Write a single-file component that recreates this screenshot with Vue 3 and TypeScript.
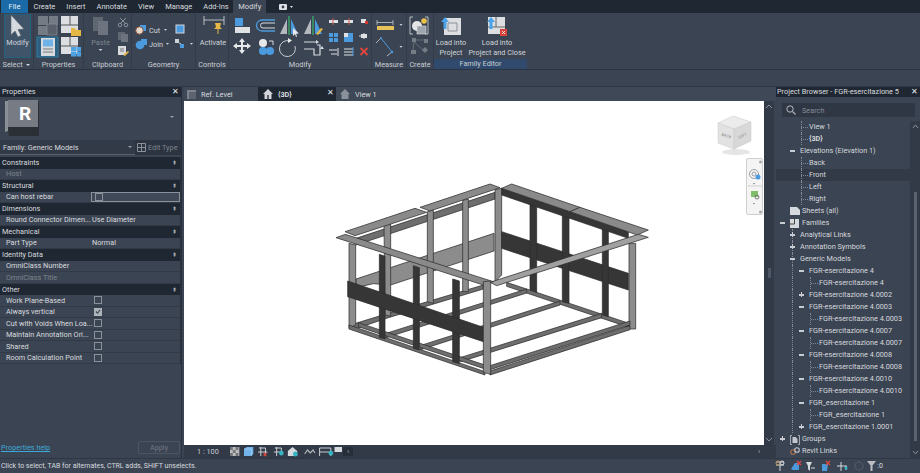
<script setup lang="ts">
const tabs = ['Create', 'Insert', 'Annotate', 'View', 'Manage', 'Add-Ins']

type Row = { label: string; kind: 'head' | 'row'; value?: string; check?: boolean; checked?: boolean; dim?: boolean; active?: boolean }
const rows: Row[] = [
  { label: 'Constraints', kind: 'head' },
  { label: 'Host', kind: 'row', dim: true },
  { label: 'Structural', kind: 'head' },
  { label: 'Can host rebar', kind: 'row', check: true, active: true },
  { label: 'Dimensions', kind: 'head' },
  { label: 'Round Connector Dimen...', kind: 'row', value: 'Use Diameter' },
  { label: 'Mechanical', kind: 'head' },
  { label: 'Part Type', kind: 'row', value: 'Normal' },
  { label: 'Identity Data', kind: 'head' },
  { label: 'OmniClass Number', kind: 'row' },
  { label: 'OmniClass Title', kind: 'row', dim: true },
  { label: 'Other', kind: 'head' },
  { label: 'Work Plane-Based', kind: 'row', check: true },
  { label: 'Always vertical', kind: 'row', check: true, checked: true },
  { label: 'Cut with Voids When Loa...', kind: 'row', check: true },
  { label: 'Maintain Annotation Ori...', kind: 'row', check: true },
  { label: 'Shared', kind: 'row', check: true },
  { label: 'Room Calculation Point', kind: 'row', check: true },
]

type Node = { t: string; x: number; sign?: '+' | '-'; hl?: boolean; bold?: boolean; icon?: string; sx?: number; dash?: boolean }
const tree: Node[] = [
  { t: 'View 1', x: 33, dash: true },
  { t: '{3D}', x: 33, bold: true, dash: true },
  { t: 'Elevations (Elevation 1)', x: 24, sign: '-', sx: 14 },
  { t: 'Back', x: 33, dash: true },
  { t: 'Front', x: 33, hl: true, dash: true },
  { t: 'Left', x: 33, dash: true },
  { t: 'Right', x: 33, dash: true },
  { t: 'Sheets (all)', x: 26, icon: 'sheet' },
  { t: 'Families', x: 26, sign: '-', sx: 4, icon: 'fam' },
  { t: 'Analytical Links', x: 24, sign: '+', sx: 14 },
  { t: 'Annotation Symbols', x: 24, sign: '+', sx: 14 },
  { t: 'Generic Models', x: 24, sign: '-', sx: 14 },
  { t: 'FGR-esercitazione 4', x: 33, sign: '-', sx: 23 },
  { t: 'FGR-esercitazione 4', x: 43, dash: true },
  { t: 'FGR-esercitazione 4.0002', x: 33, sign: '+', sx: 23 },
  { t: 'FGR-esercitazione 4.0003', x: 33, sign: '-', sx: 23 },
  { t: 'FGR-esercitazione 4.0003', x: 43, dash: true },
  { t: 'FGR-esercitazione 4.0007', x: 33, sign: '-', sx: 23 },
  { t: 'FGR-esercitazione 4.0007', x: 43, dash: true },
  { t: 'FGR-esercitazione 4.0008', x: 33, sign: '-', sx: 23 },
  { t: 'FGR-esercitazione 4.0008', x: 43, dash: true },
  { t: 'FGR-esercitazione 4.0010', x: 33, sign: '-', sx: 23 },
  { t: 'FGR-esercitazione 4.0010', x: 43, dash: true },
  { t: 'FGR_esercitazione 1', x: 33, sign: '-', sx: 23 },
  { t: 'FGR_esercitazione 1', x: 43, dash: true },
  { t: 'FGR_esercitazione 1.0001', x: 33, sign: '+', sx: 23 },
  { t: 'Groups', x: 26, sign: '+', sx: 4, icon: 'grp' },
  { t: 'Revit Links', x: 26, icon: 'link' },
]

function guides(i: number, n: Node): number[] {
  const g: number[] = []
  if (i >= 9 && i <= 25) g.push(16)
  if (i <= 1 || (i >= 3 && i <= 6)) g.push(25)
  if (n.dash && n.x === 43) g.push(34)
  return g
}

const L = '#8c8c8c', M = '#6e6e6e', D = '#363636', P = '#8a8a8a', W = '#a0a0a0'
const model: { p: string; f: string }[] = [
  // floor beams
  { p: '60,450 175,415 460,330 460,342 175,428 75,462', f: M },
  { p: '530,322 900,446 900,458 530,334', f: M },
  { p: '165,476 590,342 590,354 168,488', f: M },
  { p: '270,512 690,378 690,390 272,524', f: M },
  { p: '390,548 815,415 815,428 392,560', f: M },
  // back-left wall
  { p: '78,190 495,52 495,72 78,210', f: M },
  { p: '78,312 492,175 492,228 182,330 130,326 78,338', f: L },
  { p: '162,150 182,145 182,424 165,420', f: L },
  { p: '292,110 310,104 310,385 292,380', f: L },
  { p: '398,76 415,72 415,350 398,350', f: L },
  { p: '495,44 515,40 515,300 495,320', f: L },
  // back-right wall
  { p: '515,170 895,295 895,345 515,220', f: D },
  { p: '600,72 620,80 620,352 600,345', f: D },
  { p: '697,108 717,115 717,385 697,380', f: D },
  { p: '817,150 835,155 835,425 817,420', f: D },
  { p: '897,205 917,205 917,462 897,462', f: L },
  { p: '515,40 895,170 895,190 515,60', f: D },
  // back plates
  { p: '45,170 255,100 290,112 75,182', f: P },
  { p: '270,97 480,27 510,38 300,108', f: P },
  { p: '515,40 545,27 750,97 720,110', f: P },
  { p: '720,110 750,97 955,165 922,180', f: P },
  // left corner
  { p: '57,205 77,210 77,450 57,460', f: L },
  // front floor beams
  { p: '85,443 465,570 465,582 85,455', f: M },
  { p: '57,450 465,590 465,600 57,462', f: M },
  { p: '480,572 900,438 900,450 480,584', f: M },
  { p: '480,588 900,452 900,464 480,600', f: M },
  // front-left wall
  { p: '148,238 165,244 165,492 148,487', f: D },
  { p: '250,272 268,278 268,525 250,520', f: D },
  { p: '368,312 388,318 388,566 368,560', f: D },
  { p: '53,318 460,457 460,500 53,365', f: D },
  // plates front
  { p: '480,322 925,178 955,187 500,332', f: W },
  { p: '18,188 46,178 490,320 460,330', f: P },
  // front corner
  { p: '460,320 482,318 482,598 460,592', f: L },
]
</script>

<template>
  <div class="app">
    <div class="tabs">
      <span class="file">File</span>
      <span v-for="t in tabs" :key="t" class="tab">{{ t }}</span>
      <span class="tab cur">Modify</span>
      <svg class="cam" width="14" height="8" viewBox="0 0 14 8"><rect x="0" y="1" width="8" height="6" rx="1" fill="#dfe3e8"/><circle cx="4" cy="4" r="1.400" fill="#39414f"/><path d="M11 3h3l-1.500 2z" fill="#dfe3e8"/></svg>
    </div>

    <div class="ribbon">
      <div class="grp" style="width:34px">
        <div class="gbody">
          <svg width="34" height="47" viewBox="0 13 34 47">
            <rect x="4.500" y="14.500" width="26" height="43" fill="#3f5369" stroke="#24627f"/>
            <path d="M11 15l0 20 4-4 3 6 3-1.500-3-6 6-.5z" fill="#d6dade" stroke="#56606c" stroke-width=".6"/>
            <text x="17.500" y="45" class="rt" text-anchor="middle">Modify</text>
          </svg>
        </div>
        <div class="glabel">Select <i class="dd"></i></div>
      </div>

      <div class="grp" style="width:50px">
        <div class="gbody">
          <svg width="50" height="47" viewBox="34 13 50 47">
            <rect x="38" y="16" width="10" height="9" fill="#747b85"/><rect x="49" y="16" width="9" height="9" fill="#747b85"/><rect x="38" y="26" width="9" height="9" fill="#747b85"/><rect x="47" y="24" width="10" height="11" fill="#5a616c" stroke="#858b94" stroke-width=".8"/>
            <rect x="61" y="16" width="17" height="17" fill="#dcdee1"/><path d="M70 16v9h8M70 25h-9" stroke="#555" fill="none"/><path d="M71 28h4l1 2h5v6h-10z" fill="#e5b845"/>
            <rect x="37" y="37" width="21" height="20" fill="#2f5f7e" stroke="#2f7da5"/>
            <rect x="41" y="38" width="14" height="18" fill="#d7dade"/><rect x="43" y="39.500" width="10" height="7" fill="#6fb2e6"/><path d="M43 49h10M43 52h10" stroke="#777"/>
            <rect x="61" y="37" width="17" height="17" fill="#dcdee1"/><path d="M70 37v9h8M70 46h-9" stroke="#555" fill="none"/><rect x="71" y="47" width="5" height="4.500" fill="#4ea1e3"/><rect x="76.500" y="47" width="4.500" height="4.500" fill="#4ea1e3"/><rect x="71" y="52" width="5" height="4.500" fill="#4ea1e3"/><rect x="76.500" y="52" width="4.500" height="4.500" fill="#4ea1e3"/>
          </svg>
        </div>
        <div class="glabel">Properties</div>
      </div>

      <div class="grp" style="width:48px">
        <div class="gbody">
          <svg width="48" height="47" viewBox="84 13 48 47">
            <rect x="93" y="17" width="10" height="14" fill="#5f6772"/><rect x="98" y="21" width="10" height="14" fill="#6d747f"/>
            <text x="100.500" y="45" class="rt dim" text-anchor="middle">Paste</text><path d="M98.500 49h4l-2 2z" fill="#c8ccd2"/>
            <g stroke="#8a909a" fill="none" stroke-width="1"><path d="M120 18l6 6M126 18l-6 6"/><circle cx="120" cy="25" r="1.800"/><circle cx="126" cy="25" r="1.800"/></g>
            <rect x="118" y="32" width="7" height="8" fill="#5f6772"/><rect x="121" y="34" width="7" height="8" fill="#6d747f"/>
            <rect x="118" y="46" width="8" height="9" fill="#d8dade"/><path d="M120 49h4M120 51h4" stroke="#777"/><path d="M123 55l5-4 1 1-4 4z" fill="#e5b845"/>
          </svg>
        </div>
        <div class="glabel">Clipboard</div>
      </div>

      <div class="grp" style="width:64px">
        <div class="gbody">
          <svg width="64" height="47" viewBox="132 13 64 47">
            <rect x="140" y="25" width="6" height="6" fill="#4c9ade"/><circle cx="139.500" cy="30.500" r="3.800" fill="#e2d7c8" stroke="#7a4b3a"/>
            <text x="149" y="33" class="rt">Cut</text><path d="M164 29h3l-1.500 1.800z" fill="#d6dade"/>
            <rect x="141" y="39" width="6" height="6" fill="#4c9ade"/><circle cx="140" cy="45" r="4.300" fill="#4c9ade"/>
            <text x="149" y="47" class="rt">Join</text><path d="M166 43h3l-1.500 1.800z" fill="#d6dade"/>
            <rect x="176" y="25" width="8" height="8" fill="#4c9ade" stroke="#cfd3d8"/>
            <rect x="175" y="39" width="4" height="4" fill="#cfd3d8"/><rect x="180" y="44" width="4" height="4" fill="#4c9ade"/><path d="M179 43l2 1" stroke="#ccc"/>
            <path d="M190 43h3l-1.500 1.800z" fill="#d6dade"/>
          </svg>
        </div>
        <div class="glabel">Geometry</div>
      </div>

      <div class="grp" style="width:33px">
        <div class="gbody">
          <svg width="33" height="47" viewBox="196 13 33 47">
            <path d="M204 16v9M224 16v9M204 20h20" stroke="#d6dade" stroke-width=".8" fill="none"/>
            <path d="M215 23h6l-1 4 2 2h-8l2-2z" fill="#e5b845"/><path d="M218 29v5" stroke="#e5b845"/>
            <text x="213" y="45" class="rt" text-anchor="middle">Activate</text>
          </svg>
        </div>
        <div class="glabel">Controls</div>
      </div>

      <div class="grp" style="width:143px">
        <div class="gbody">
          <svg width="143" height="47" viewBox="229 13 143 47">
            <rect x="235" y="18" width="8" height="8" fill="#4c9ade"/><path d="M235 27h15v6h-15z" fill="#dfe1e4"/>
            <path d="M275 20h-13a5.500 5.500 0 0 0 0 11h13" fill="none" stroke="#4c9ade" stroke-width="1.300"/><path d="M275 23h-12a2.500 2.500 0 0 0 0 5h12" fill="none" stroke="#d6dade"/>
            <path d="M287 19l-7 15h7z" fill="#b4b8be"/><path d="M289 16v19" stroke="#3d9e6a" stroke-width="1.500"/><path d="M291 19l7 15h-7z" fill="#4c9ade"/><path d="M293 28v8l2-2 1 3 1-.5-1-3h3z" fill="#e8e8e8"/>
            <path d="M311 19l-7 15h7z" fill="#b4b8be"/><path d="M313 16v19" stroke="#3d9e6a" stroke-width="1.500"/><path d="M315 19l7 15h-7z" fill="#4c9ade"/><path d="M316 34l5-6 2 1-5 6z" fill="#e5b845"/>
            <g fill="#dfe1e4"><rect x="329" y="20" width="9" height="3"/><rect x="344" y="20" width="9" height="3"/><rect x="361" y="19" width="5" height="4"/></g>
            <path d="M333 18v7M349 18v7" stroke="#d05a4a"/><rect x="365" y="21" width="3" height="3" fill="#d0392d"/>
            <path d="M242 38l3 4h-2v3h4v-2l4 3-4 3v-2h-4v3h2l-3 4-3-4h2v-3h-4v2l-4-3 4-3v2h4v-3h-2z" fill="#e6e8ea"/>
            <circle cx="263" cy="43" r="4" fill="#e6e8ea"/><path d="M269 41h4v4" fill="none" stroke="#d6dade"/><circle cx="263" cy="51" r="4" fill="#4c9ade"/><circle cx="270" cy="51" r="4" fill="#4c9ade"/>
            <path d="M290 41a8 8 0 1 0 5 5" fill="none" stroke="#d6dade" stroke-width=".9"/><path d="M288 38l4 2.500-4 2.500z" fill="#e6e8ea"/>
            <path d="M304 42h13M317 45h3v10h-6v-6h-10" fill="none" stroke="#d6dade" stroke-width="1.200"/><path d="M316 40l3 2-3 2zM322 46l2 3h-4z" fill="#d6dade"/>
            <g fill="#4c9ade"><rect x="329" y="33" width="4" height="4"/><rect x="334" y="33" width="4" height="4"/><rect x="329" y="38" width="4" height="4"/><rect x="334" y="38" width="4" height="4"/></g>
            <rect x="344" y="33" width="9" height="9" fill="#4c9ade"/><rect x="344" y="33" width="4" height="4" fill="#dfe1e4"/>
            <rect x="361" y="34" width="6" height="4" fill="#dfe1e4"/><path d="M359 36h3M364 33v6" stroke="#dfe1e4"/>
            <path d="M329 50h8M331 54h6M338 48v8" stroke="#dfe1e4" fill="none"/><path d="M344 49h9M344 52h9M344 55h9" stroke="#dfe1e4" fill="none"/><path d="M353 47v9" stroke="#4c9ade"/>
            <path d="M360.500 48l7 7M367.500 48l-7 7" stroke="#e0463a" stroke-width="1.800"/>
          </svg>
        </div>
        <div class="glabel">Modify</div>
      </div>

      <div class="grp" style="width:35px">
        <div class="gbody">
          <svg width="35" height="47" viewBox="372 13 35 47">
            <path d="M377 20v5M393 20v5M377 22.500h16" stroke="#d6dade" stroke-width=".7" fill="none"/><rect x="377" y="26" width="17" height="4" fill="#e5c35a"/>
            <path d="M399.500 24h3l-1.500 1.800z" fill="#d6dade"/>
            <path d="M376 43l5-5M387 56l6-5" stroke="#cfd3d8" fill="none" stroke-width=".8"/><path d="M381 38l11 14" stroke="#4c9ade"/><circle cx="381" cy="38" r="1" fill="#4c9ade"/><circle cx="392" cy="52" r="1.200" fill="#4c9ade"/>
            <path d="M399.500 46h3l-1.500 1.800z" fill="#d6dade"/>
          </svg>
        </div>
        <div class="glabel">Measure</div>
      </div>

      <div class="grp" style="width:27px">
        <div class="gbody">
          <svg width="27" height="47" viewBox="407 13 27 47">
            <path d="M413 17h-3v17h3M425 17h3v17h-3" stroke="#d6dade" fill="none" stroke-width=".8"/>
            <circle cx="417" cy="26" r="5" fill="#e4e6e8"/><rect x="417" y="26" width="9" height="8" fill="#9fa5ac" stroke="#dfe1e4" stroke-width=".6"/><circle cx="424" cy="21" r="2.800" fill="#e8c24a"/>
            <g fill="#767c86"><rect x="412" y="38" width="4" height="4"/><rect x="424" y="39" width="4" height="4"/><rect x="411" y="50" width="5" height="4"/><path d="M425 47l3 3-3 3-3-3z"/></g>
            <path d="M414 42l-1 8M416 40h8M414 42l9 8" stroke="#767c86" fill="none" stroke-width=".7"/>
          </svg>
        </div>
        <div class="glabel">Create</div>
      </div>

      <div class="grp fe" style="width:93px">
        <div class="gbody">
          <svg width="93" height="47" viewBox="434 13 93 47">
            <rect x="444" y="18" width="17" height="17" fill="#dcdee1"/><path d="M448 23h9v8h-9z" fill="none" stroke="#8c9197"/>
            <path d="M445 17l4 5h-2.500v7h-3v-7H441z" fill="#4aa3e8"/>
            <text x="451" y="45" class="rt" text-anchor="middle">Load into</text>
            <text x="451" y="55" class="rt" text-anchor="middle">Project</text>
            <rect x="488" y="17" width="17" height="17" fill="#dcdee1"/><path d="M496 17v10h9M488 27h8" stroke="#666" fill="none"/>
            <path d="M491 17l4 5h-2.500v7h-3v-7H487z" fill="#4aa3e8"/>
            <rect x="500" y="29" width="7" height="7" fill="#d8423a"/><path d="M502 31l3 3M505 31l-3 3" stroke="#fff" stroke-width=".8"/>
            <text x="497" y="45" class="rt" text-anchor="middle">Load into</text>
            <text x="497" y="55" class="rt" text-anchor="middle">Project and Close</text>
          </svg>
        </div>
        <div class="glabel blue">Family Editor</div>
      </div>
    </div>
    <div class="band"></div>

    <div class="main">
      <aside class="props">
        <div class="phead"><span>Properties</span><span class="x">✕</span></div>
        <div class="ptype">
          <svg width="38" height="38" viewBox="0 0 38 38"><path d="M4 4h34v34H8z" fill="#2b2f36"/><path d="M4 3h3v30l-3 1z" fill="#8b9098"/><rect x="7" y="2" width="30" height="27" fill="#777c84"/><text x="24" y="22" text-anchor="middle" class="rlogo">R</text></svg>
          <i class="ptdd"></i>
        </div>
        <div class="pfam">
          <div class="fam">Family: Generic Models<i class="ptdd small"></i></div>
          <div class="edit"><svg width="9" height="9" viewBox="0 0 9 9"><path d="M.5.500h8v8h-8zM.5 4.500h8M4.500.5v8" fill="none" stroke="#8b919a"/></svg>Edit Type</div>
        </div>
        <div class="plist">
          <div v-for="r in rows" :key="r.label" :class="r.kind === 'head' ? 'phd' : 'prow'">
            <template v-if="r.kind === 'head'">
              <span>{{ r.label }}</span><span class="cl">⇞</span>
            </template>
            <template v-else>
              <span class="pl" :class="{ dim: r.dim }">{{ r.label }}</span>
              <span class="pv" :class="{ act: r.active }">
                <span v-if="r.check" class="cb" :class="{ on: r.checked }"><svg v-if="r.checked" width="7" height="7" viewBox="0 0 7 7"><path d="M1 3.500l2 2 3-4" fill="none" stroke="#3b4453" stroke-width="1.300"/></svg></span>
                <template v-else>{{ r.value }}</template>
              </span>
            </template>
          </div>
        </div>
        <div class="pfoot"><a class="help">Properties help</a><span class="apply">Apply</span></div>
      </aside>

      <section class="center">
        <div class="vtabs">
          <div class="vt"><svg width="9" height="9" viewBox="0 0 9 9"><rect width="9" height="9" fill="#7c838d"/><rect x="2" y="2" width="7" height="7" fill="#5d6470"/></svg>Ref. Level</div>
          <div class="vt on"><svg width="10" height="10" viewBox="0 0 10 10"><path d="M5 0l5 5H8.500v5h-7V5H0z" fill="#d3d6da"/><rect x="4" y="6" width="2" height="4" fill="#5b636e"/></svg>{3D}<span class="x">✕</span></div>
          <div class="vt last"><svg width="10" height="10" viewBox="0 0 10 10"><path d="M5 0l5 5H8.500v5h-7V5H0z" fill="#8b919a"/></svg>View 1</div>
        </div>
        <div class="vmid">
          <div class="canvas">
            <svg class="model" width="320" height="215" viewBox="0 0 960 645">
              <polygon v-for="(m, i) in model" :key="i" :points="m.p" :fill="m.f" stroke="#2c2c2c" stroke-width="2.200" stroke-linejoin="round"/>
            </svg>
            <svg class="cube" width="40" height="44" viewBox="0 0 40 44">
              <ellipse cx="20" cy="39" rx="14" ry="3" fill="#e5e5e5"/>
              <path d="M2 10l15-7 18 6-17 7z" fill="#ececec" stroke="#c9c9c9" stroke-width=".5"/>
              <path d="M2 10l16 6v20L2 30z" fill="#e2e2e2" stroke="#c9c9c9" stroke-width=".5"/>
              <path d="M18 16l17-7v19l-17 8z" fill="#d8d8d8" stroke="#c9c9c9" stroke-width=".5"/>
              <text x="10" y="24" class="ct" transform="rotate(18 10 24)" text-anchor="middle">BACK</text>
              <text x="27" y="24" class="ct" transform="rotate(-22 27 24)" text-anchor="middle">LEFT</text>
            </svg>
            <div class="navbar">
              <svg width="16" height="56" viewBox="0 0 16 56">
                <circle cx="13.500" cy="3" r="1.500" fill="#aaa"/>
                <circle cx="7" cy="15" r="4.500" fill="none" stroke="#9aa0a8"/><circle cx="7" cy="15" r="2" fill="none" stroke="#9aa0a8"/><circle cx="11" cy="18" r="2.500" fill="#4c9ade"/>
                <path d="M6 24h2l-1 1.500z" fill="#777"/><path d="M1 27h14" stroke="#cfcfcf"/>
                <rect x="4" y="32" width="7" height="6" fill="#7fbf6a"/><circle cx="10" cy="38" r="2" fill="none" stroke="#777"/><path d="M6 44h2l-1 1.500z" fill="#777"/>
                <circle cx="13.500" cy="53" r="1.500" fill="#aaa"/>
              </svg>
            </div>
          </div>
          <div class="vsb"><svg width="10" height="6" viewBox="0 0 10 6"><path d="M2 4l3-3 3 3" fill="none" stroke="#8b919a"/></svg><span class="th"></span><span class="grow"></span><svg width="10" height="6" viewBox="0 0 10 6"><path d="M2 2l3 3 3-3" fill="none" stroke="#8b919a"/></svg></div>
        </div>
        <div class="vctl">
          <span class="scale">1 : 100</span>
          <svg width="112" height="11" viewBox="0 0 120 11" preserveAspectRatio="none">
            <g><rect x="0" y="1" width="10" height="9" fill="#b9bcc0"/><path d="M0 1h3v3H0zM6 1h3v3H6zM3 4h3v3H3zM0 7h3v3H0zM6 7h3v3H6z" fill="#777"/></g>
            <g><path d="M15 3l3-2h7v7l-2 2h-8z" fill="#72b4ea"/><path d="M15 3h8v7" fill="none" stroke="#a8d3f5" stroke-width=".7"/></g>
            <g stroke="#cfd3d8" fill="none"><path d="M30 6h10M33 1v9"/><path d="M31 2h7v6"/></g><path d="M36 7l3 3M39 7l-3 3" stroke="#e0463a" stroke-width="1.200"/>
            <g stroke="#cfd3d8" fill="none"><path d="M47 6h9M50 1v9M48 2h7v6"/></g><circle cx="55" cy="7" r="2.500" fill="#33b5c5"/>
            <path d="M62 5l5-4 5 4v5H62z" fill="#d6dade"/><circle cx="70" cy="8" r="2.500" fill="#33b5c5"/>
            <path d="M80 8l3-4 3 3 3-3 2 3" fill="none" stroke="#b5b9be" stroke-width="1.200"/>
            <path d="M96 2h12v8M96 2v8M96 6h12" fill="none" stroke="#cfd3d8"/><circle cx="108" cy="7" r="2.500" fill="#33b5c5"/>
            <rect x="112" y="1" width="8" height="5" fill="#d6dade"/>
          </svg>
          <span class="lt">‹</span>
          <span class="grow"></span>
          <span class="rt2">›</span>
        </div>
      </section>

      <aside class="browser">
        <div class="phead"><span>Project Browser - FGR-esercitazione 5</span><span class="x">✕</span></div>
        <div class="search"><svg width="10" height="10" viewBox="0 0 10 10"><circle cx="4" cy="4" r="3.200" fill="none" stroke="#b5b9be"/><path d="M6.500 6.500L9.500 9.500" stroke="#b5b9be" stroke-width="1.100"/></svg><span>Search</span></div>
        <div class="bwrap">
          <div class="tree">
            <div v-for="(n, i) in tree" :key="i" class="node" :class="{ hl: n.hl }" :style="{ paddingLeft: n.x + 'px' }">
              <span v-for="g in guides(i, n)" :key="g" class="vg" :style="{ left: g + 'px' }"></span>
              <span v-if="n.dash" class="dash" :style="{ left: (n.x - 8) + 'px' }"></span>
              <span v-if="n.sign" class="sign" :class="{ plus: n.sign === '+' }" :style="{ left: n.sx + 'px' }"></span>
              <svg v-if="n.icon === 'sheet'" class="nico" width="10" height="8" viewBox="0 0 10 8"><path d="M0 0h7l3 3v5H0z" fill="#d5d8dc"/></svg>
              <svg v-if="n.icon === 'fam'" class="nico" width="9" height="9" viewBox="0 0 9 9"><rect width="9" height="9" fill="#d5d8dc"/><path d="M4.500 0v5H0" fill="none" stroke="#444"/></svg>
              <svg v-if="n.icon === 'grp'" class="nico" width="10" height="10" viewBox="0 0 10 10"><path d="M2 .5H.5v9H2M8 .5h1.500v9H8" fill="none" stroke="#d5d8dc" stroke-width=".7"/><path d="M2.500 2h3l2 2v4h-5z" fill="#c3c7cc"/></svg>
              <svg v-if="n.icon === 'link'" class="nico" width="10" height="8" viewBox="0 0 10 8"><circle cx="3" cy="5" r="2.300" fill="none" stroke="#a8724f" stroke-width="1.100"/><circle cx="7" cy="3" r="2.300" fill="none" stroke="#c3c7cc" stroke-width="1.100"/></svg>
              <span :class="{ b: n.bold }">{{ n.t }}</span>
            </div>
          </div>
          <div class="bsb"><svg width="9" height="6" viewBox="0 0 9 6"><path d="M2 4l2.500-3 2.500 3" fill="none" stroke="#8b919a"/></svg><span class="bth"></span><svg width="9" height="6" viewBox="0 0 9 6"><path d="M2 2l2.500 3 2.500-3" fill="none" stroke="#8b919a"/></svg></div>
        </div>
      </aside>
    </div>

    <div class="status">
      <span class="msg">Click to select, TAB for alternates, CTRL adds, SHIFT unselects.</span>
      <svg width="102" height="12" viewBox="0 0 102 12">
        <path d="M1 2h8M1 5h8M5 5v6" stroke="#d6dade" fill="none"/><circle cx="3" cy="3" r="2" fill="none" stroke="#b9935a"/><circle cx="7" cy="3" r="2" fill="none" stroke="#d6dade"/>
        <path d="M16 9l4-6h4v7h-6z" fill="#4c9ade"/><path d="M22 1l4 4M26 1l-4 4" stroke="#e0463a" stroke-width="1.200"/>
        <path d="M31 2h6l-2 4v5l-2-2V6z" fill="#d6dade"/><path d="M36 8h4" stroke="#d6dade"/>
        <path d="M47 11V4h6l-1 7z" fill="#4c9ade"/><path d="M51 1l4 4M55 1l-4 4" stroke="#e0463a" stroke-width="1.200"/>
        <path d="M62 6h10M66 2v9M71 6v4" stroke="#d6dade" fill="none"/><circle cx="71" cy="8" r="1.500" fill="#33b5c5"/>
        <circle cx="84" cy="6" r="4" fill="none" stroke="#6d747f" stroke-dasharray="1.500 1.200"/>
        <path d="M92 1h9l-3.500 4.500V11h-2V5.500z" fill="#b9bdc2"/>
      </svg>
      <span class="zero">:0</span>
    </div>
  </div>
</template>

<style>
html, body { margin: 0; padding: 0; background: #3b4453; overflow: hidden; }
</style>

<style scoped>
.app { width: 920px; height: 473px; display: flex; flex-direction: column; overflow: hidden; font-family: Roboto, "Open Sans", sans-serif; font-size: 7.300px; color: #d8dbdf; background: #3b4453; }
.tabs { height: 13px; background: #1f2732; display: flex; align-items: stretch; line-height: 13px; color: #d8dbdf; font-size: 7.500px; }
.file { width: 27px; text-align: center; background: #1a6aa8; color: #e8eef4; margin-left: 1px; margin-right: 0; }
.tab { padding: 0 5.500px; }
.tab.cur { background: #3b4453; padding: 0 5px; margin-left: -1px; }
.cam { margin: 3px 0 0 13px; }
.ribbon { height: 57px; background: #3b4453; display: flex; border-bottom: 1px solid #2c3340; box-sizing: border-box; }
.grp { display: flex; flex-direction: column; border-right: 1px solid #333b49; box-sizing: border-box; }
.gbody { height: 47px; overflow: hidden; }
.gbody svg { display: block; overflow: visible; }
.glabel { height: 9px; line-height: 10px; text-align: center; color: #c8ccd2; white-space: nowrap; }
.glabel.blue { background: #2f4a6c; height: 10px; line-height: 10px; }
.fe { border-right: 0; }
.rt { font-size: 7.300px; fill: #d0d4d9; font-family: Roboto, sans-serif; }
.rt.dim { fill: #7d848e; }
.dd { display: inline-block; border: 2px solid transparent; border-top: 2.500px solid #d6dade; border-bottom: 0; margin-left: 2px; vertical-align: 1px; }
.band { height: 17px; background: #3b4453; border-bottom: 1px solid #2f3644; box-sizing: border-box; }
.main { flex: 1; min-height: 0; display: flex; }
.props { width: 182px; display: flex; flex-direction: column; background: #3b4453; border-right: 1px solid #2a313d; box-sizing: border-box; }
.phead { height: 10px; background: #1f2732; display: flex; justify-content: space-between; align-items: center; padding: 0 2px; line-height: 10px; color: #d8dbdf; flex: none; white-space: nowrap; }
.x { font-size: 8px; color: #e8eaed; }
.ptype { height: 43px; position: relative; padding: 1px 0 0 1px; box-sizing: border-box; flex: none; }
.ptype svg { display: block; }
.ptdd { position: absolute; right: 7px; top: 19px; border: 2px solid transparent; border-top: 2.500px solid #98a0aa; border-bottom: 0; }
.ptdd.small { position: static; margin-left: auto; display: inline-block; }
.pfam { height: 17px; display: flex; flex: none; }
.fam { width: 135px; display: flex; align-items: center; padding: 0 3px; box-sizing: border-box; background: #323a47; border-bottom: 1px solid #586270; height: 15px; }
.edit { flex: 1; height: 15px; background: #2d3441; display: flex; align-items: center; gap: 2px; padding-left: 2px; color: #7d848e; box-sizing: border-box; white-space: nowrap; }
.plist { flex: none; border-right: 1px solid #2a313d; }
.phd { height: 11.500px; background: #1f2732; display: flex; justify-content: space-between; align-items: center; padding: 0 3px 0 2px; line-height: 11.500px; box-sizing: border-box; }
.cl { font-size: 6px; color: #c0c4ca; }
.prow { height: 11.500px; display: flex; align-items: center; line-height: 11.500px; background: #3b4453; border-bottom: 1px solid #333a47; box-sizing: border-box; }
.pl { width: 91px; padding-left: 6px; box-sizing: border-box; white-space: nowrap; flex: none; }
.pl.dim { color: #7d848e; }
.pv { flex: 1; height: 100%; display: flex; align-items: center; padding-left: 1px; box-sizing: border-box; }
.pv.act { border: 1px solid #8b919a; background: #3f4958; padding-left: 1px; }
.cb { width: 6px; height: 6px; border: 1px solid #8b919a; display: inline-flex; align-items: center; justify-content: center; margin-left: 2px; }
.cb.on { background: #aeb3b9; border-color: #aeb3b9; }
.pfoot { margin-top: auto; height: 15px; display: flex; justify-content: space-between; align-items: center; padding: 0 1px 3px 1px; }
.help { color: #3ea9d6; text-decoration: underline; }
.apply { width: 40px; height: 11px; border: 1px solid #4d5563; border-radius: 2px; text-align: center; line-height: 11px; color: #6f7681; }
.center { width: 592px; margin-left: 2px; display: flex; flex-direction: column; }
.vtabs { height: 14px; display: flex; background: #3f4857; flex: none; }
.vt { display: flex; align-items: center; gap: 5px; padding-left: 3px; width: 74px; box-sizing: border-box; position: relative; background: #3f4857; color: #d8dbdf; }
.vt.on { background: #1f2732; width: 78px; padding-left: 5px; font-weight: 700; }
.vt.on .x { position: absolute; right: 2px; top: 1px; font-weight: 400; }
.vt.last { padding-left: 4px; }
.vmid { flex: 1; min-height: 0; display: flex; }
.canvas { width: 580px; background: #fff; position: relative; overflow: hidden; }
.model { position: absolute; left: 146px; top: 74px; }
.cube { position: absolute; left: 532px; top: 12px; }
.ct { font-size: 4px; fill: #8a8a8a; font-family: Roboto, sans-serif; }
.navbar { position: absolute; left: 562px; top: 57px; width: 17px; height: 57px; background: #f4f4f4; border: 1px solid #cfcfcf; border-radius: 2px; box-sizing: border-box; }
.navbar svg { display: block; }
.vsb { width: 10px; flex: none; background: #323a48; display: flex; flex-direction: column; align-items: center; padding: 3px 0; box-sizing: border-box; }
.grow { flex: 1; }
.th { width: 3px; height: 10px; background: #4e5766; margin-top: 158px; }
.vctl { height: 13px; display: flex; align-items: center; background: #323a48; flex: none; }
.scale { margin: 0 13px; width: 20px; white-space: nowrap; color: #c8ccd2; }
.vctl svg { flex: none; }
.lt { width: 10px; margin-left: 1px; color: #aeb3b9; text-align: center; background: #262e3a; }
.rt2 { width: 10px; color: #aeb3b9; margin-right: 12px; text-align: center; }
.browser { width: 144px; display: flex; flex-direction: column; background: #3b4453; }
.browser .phead { padding-left: 1px; }
.search { height: 14px; margin: 6px 5px 4px 6px; background: #2f3644; display: flex; align-items: center; gap: 6px; padding-left: 4px; color: #868d97; flex: none; }
.bwrap { flex: 1; min-height: 0; display: flex; overflow: hidden; }
.tree { width: 134px; overflow: hidden; }
.node { height: 12px; line-height: 12px; position: relative; white-space: nowrap; display: flex; align-items: center; color: #d5d8dc; }
.node.hl { background: #323a47; }
.b { font-weight: 700; }
.dash { position: absolute; width: 7px; top: 6px; border-top: 1px dotted #828893; }
.vg { position: absolute; top: 0; height: 12px; border-left: 1px dotted #828893; }
.sign { position: absolute; top: 5px; width: 5px; height: 1.500px; background: #c8ccd2; }
.sign.plus::after { content: ""; position: absolute; left: 1.750px; top: -1.750px; width: 1.500px; height: 5px; background: #c8ccd2; }
.nico { position: absolute; left: 14px; top: 2px; }
.bsb { width: 10px; flex: none; background: #323a48; display: flex; flex-direction: column; align-items: center; padding: 3px 0; box-sizing: border-box; }
.bth { width: 3px; height: 255px; background: #5a6372; margin: 62px 0 8px; }
.status { height: 15px; background: #3b4453; border-top: 1px solid #2f3644; box-sizing: border-box; display: flex; align-items: center; padding: 0 37px 0 1px; flex: none; white-space: nowrap; }
.msg { margin-right: auto; font-size: 7px; }
.status svg { flex: none; }
.zero { font-size: 7px; }
.rlogo { font: 700 19px Roboto, sans-serif; fill: #fff; }
</style>
